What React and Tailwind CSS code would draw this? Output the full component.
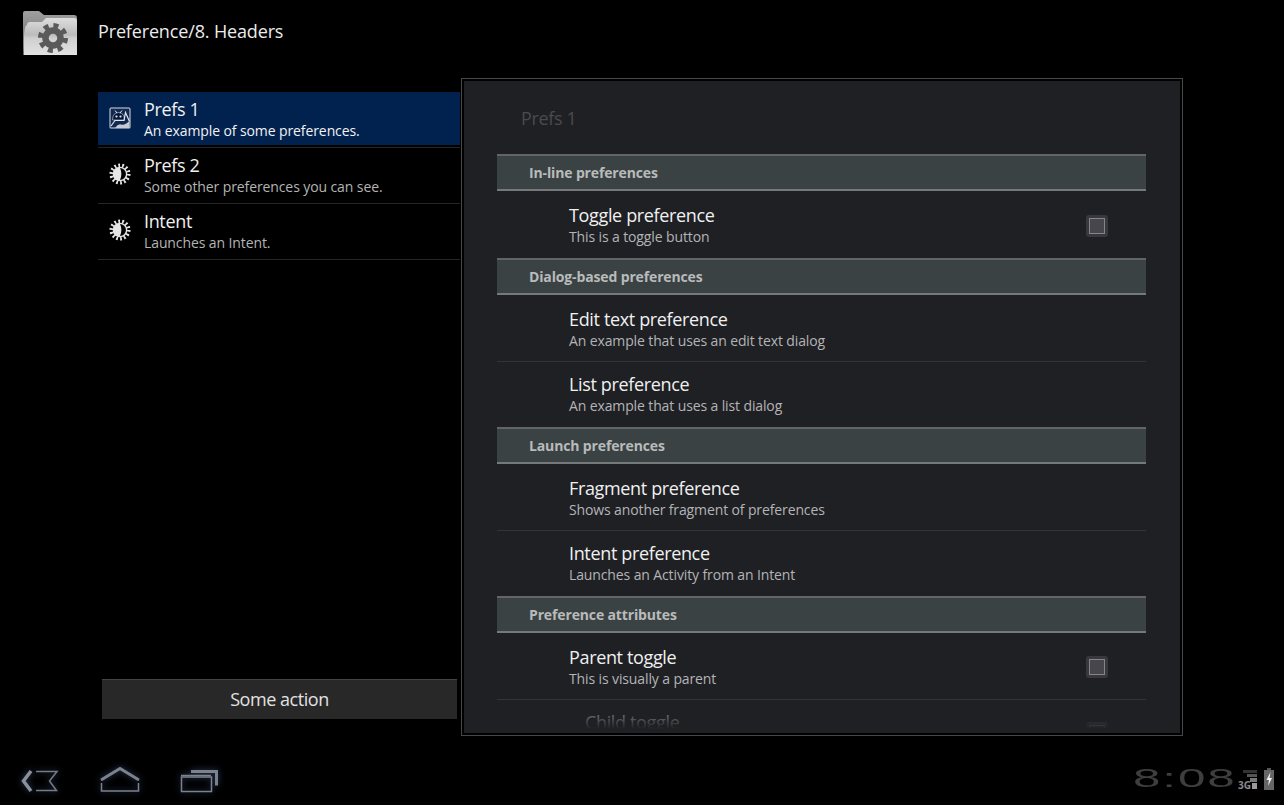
import React from "react";

const headers = [
  { title: "Prefs 1", sub: "An example of some preferences.", icon: "android", active: true },
  { title: "Prefs 2", sub: "Some other preferences you can see.", icon: "sun" },
  { title: "Intent", sub: "Launches an Intent.", icon: "sun" },
];

const sections = [
  { title: "In-line preferences", rows: [{ title: "Toggle preference", sub: "This is a toggle button", check: true }] },
  {
    title: "Dialog-based preferences",
    rows: [
      { title: "Edit text preference", sub: "An example that uses an edit text dialog" },
      { title: "List preference", sub: "An example that uses a list dialog" },
    ],
  },
  {
    title: "Launch preferences",
    rows: [
      { title: "Fragment preference", sub: "Shows another fragment of preferences" },
      { title: "Intent preference", sub: "Launches an Activity from an Intent" },
    ],
  },
  {
    title: "Preference attributes",
    rows: [
      { title: "Parent toggle", sub: "This is visually a parent", check: true },
      { title: "Child toggle", check: true, child: true },
    ],
  },
];

function FolderIcon() {
  return (
    <svg width="56" height="46" viewBox="0 0 56 46">
      <defs>
        <linearGradient id="fb" x1="0" y1="0" x2="0" y2="1">
          <stop offset="0" stopColor="#a0a0a0" />
          <stop offset="1" stopColor="#666" />
        </linearGradient>
        <linearGradient id="ff" x1="0" y1="0" x2="0" y2="1">
          <stop offset="0" stopColor="#dedede" />
          <stop offset="0.45" stopColor="#bcbcbc" />
          <stop offset="0.55" stopColor="#cfcfcf" />
          <stop offset="1" stopColor="#e2e2e2" />
        </linearGradient>
      </defs>
      <path d="M1 45V3q0-2 2-2h14l5 4h30q3 0 3 3v37z" fill="url(#fb)" />
      <path d="M2 45q-1-30 3-30q0-3 3-3h12l4-4h28q3 0 3 3v34z" fill="url(#ff)" />
      <circle cx="31" cy="28" r="12.5" fill="none" stroke="#5a5a5a" strokeWidth="5" strokeDasharray="5 4.82" />
      <circle cx="31" cy="28" r="7.5" fill="none" stroke="#5a5a5a" strokeWidth="6.5" />
    </svg>
  );
}

function AndroidIcon() {
  return (
    <svg width="22" height="22" viewBox="0 0 22 22">
      <rect x="0.5" y="0.5" width="21" height="21" rx="1.5" fill="#d8dde4" />
      <rect x="1.5" y="1.5" width="19" height="19" fill="#12294f" />
      <path d="M3.500 13q0-7 6-7.500q6 .5 6 7.500z" fill="#04173a" stroke="#c8d0dc" strokeWidth="0.6" />
      <path d="M6 3.500l2 2.500M13 3.500l-2 2.500" stroke="#e6eaf0" strokeWidth="1" />
      <circle cx="7.500" cy="9.500" r="1.100" fill="#e6eaf0" />
      <circle cx="11.500" cy="9.500" r="1.100" fill="#e6eaf0" />
      <path d="M2 19l4-5.500h9l1.500-8l4 9" stroke="#dfe4ea" strokeWidth="1.200" fill="none" />
      <path d="M6 21q3-4.500 6-3.500q4 1 8.500-3.500v7z" fill="#c4cbd6" />
    </svg>
  );
}

function SunIcon() {
  return (
    <svg width="22" height="22" viewBox="0 0 24 24">
      <circle cx="12" cy="12" r="9.500" fill="none" stroke="#e6e6e6" strokeWidth="4" strokeDasharray="1.900 2.360" />
      <circle cx="12" cy="12" r="8" fill="#e6e6e6" />
      <path d="M12 5.500a6.500 6.500 0 0 1 0 13q3-6.500 0-13z" fill="#000" />
    </svg>
  );
}

function Check() {
  return (
    <span className="flex w-[22px] h-[22px] items-center justify-center rounded-[3px] bg-[#38383d] mr-[38px] shrink-0">
      <span className="block w-[16px] h-[16px] border border-[#84848a] bg-[#46464c]" />
    </span>
  );
}

function Row({ row, last }) {
  return (
    <div className={`flex h-[65px] items-center justify-between ${last ? "" : "border-b border-[#333438]"}`}>
      <div className={`h-[65px] pt-[10px] ${row.child ? "pl-[88px]" : "pl-[72px]"}`}>
        <div className={`text-[18px] leading-[25px] tracking-[-0.35px] ${row.child ? "text-[#77777a]" : "text-[#f0f0f0]"}`}>{row.title}</div>
        {row.sub && <div className="text-[14px] leading-[18px] tracking-[-0.12px] text-[#b4b4b6]">{row.sub}</div>}
      </div>
      {row.check && <Check />}
    </div>
  );
}

function BackIcon() {
  return (
    <svg className="drop-shadow-[0_0_3px_#2c3f66]" width="44" height="30" viewBox="18 765 44 30" fill="none">
      <path d="M31 771l-7.500 10l7.500 10" stroke="#8b9098" strokeWidth="3.500" />
      <path d="M36 771.500h21l-7.500 9.500l7 9.500h-20.500" stroke="#777c84" strokeWidth="1.500" />
    </svg>
  );
}

function HomeIcon() {
  return (
    <svg className="drop-shadow-[0_0_3px_#2c3f66]" width="44" height="30" viewBox="98 765 44 30" fill="none">
      <path d="M101 780l19-11.500l19 11.500" stroke="#7d828a" strokeWidth="3" />
      <path d="M101.500 783v8h37v-8" stroke="#7d828a" strokeWidth="1.500" />
    </svg>
  );
}

function RecentIcon() {
  return (
    <svg className="drop-shadow-[0_0_3px_#2c3f66]" width="44" height="30" viewBox="178 765 44 30" fill="none">
      <path d="M191 771.500h25.500v14" stroke="#7d828a" strokeWidth="3" />
      <rect x="181.500" y="777" width="30" height="14.500" stroke="#7d828a" strokeWidth="1.500" />
      <path d="M181 775.500h30" stroke="#7d828a" strokeWidth="1.500" />
    </svg>
  );
}

export default function App() {
  return (
    <div className="w-[1284px] h-[805px] overflow-hidden bg-black text-white font-['Open_Sans','Noto_Sans',sans-serif]">
      <div className="flex h-[62px] items-center pl-[22px]">
        <div className="mt-[3px]"><FolderIcon /></div>
        <span className="ml-[20px] text-[18px] tracking-[-0.15px] text-[#ececec]">Preference/8. Headers</span>
      </div>

      <div className="flex h-[658px] mt-[16px] pl-[98px]">
        <div className="flex w-[362px] flex-col pt-[14px] pb-[17px]">
          {headers.map((h) => (
            <div key={h.title} className="border-b border-[#262626] h-[56px] pb-[1px]">
              <div className={`flex h-[53px] items-center ${h.active ? "bg-[#01214e]" : ""}`}>
                <div className="flex w-[46px] justify-center pr-[2px] pb-[2px]">
                  {h.icon === "android" ? <AndroidIcon /> : <SunIcon />}
                </div>
                <div>
                  <div className="text-[18px] leading-[23px] tracking-[-0.35px] text-[#f0f0f0]">{h.title}</div>
                  <div className={`text-[14px] leading-[19px] tracking-[-0.1px] ${h.active ? "text-[#f2f2f2]" : "text-[#b4b4b4]"}`}>{h.sub}</div>
                </div>
              </div>
            </div>
          ))}
          <button className="mt-auto ml-[4px] mr-[3px] h-[40px] border-t border-[#444] bg-[#282828] text-[18px] tracking-[-0.45px] text-[#e2e2e2]">
            Some action
          </button>
        </div>

        <div className="ml-[1px] w-[722px] h-[658px] border border-[#48484a] p-[2px]">
          <div className="relative h-full overflow-hidden bg-[#1f2024] pl-[33px] pr-[34px]">
            <div className="flex h-[73px] items-center pl-[24px] pt-[1px] text-[18px] tracking-[-0.35px] text-[#4a4a4e]">Prefs 1</div>
            {sections.map((s) => (
              <div key={s.title}>
                <div className="mb-[2px] flex h-[37px] items-center border-y-2 border-t-[#626466] border-b-[#76797a] bg-[#3a4244] pl-[32px] text-[14px] font-bold tracking-[-0.14px] text-[#b9bbbb]">
                  {s.title}
                </div>
                {s.rows.map((r, i) => (
                  <Row key={r.title} row={r} last={i === s.rows.length - 1} />
                ))}
              </div>
            ))}
            <div className="absolute bottom-0 left-0 right-0 h-[20px] bg-gradient-to-b from-transparent to-[#1f2024] to-80%" />
          </div>
        </div>
      </div>

      <div className="flex h-[69px] pt-[29px] pl-[18px]">
        <div className="flex gap-[36px]">
          <BackIcon />
          <HomeIcon />
          <RecentIcon />
        </div>
        <div className="ml-auto flex items-start pr-[9px]">
          <span className="block w-[100px] origin-top-left scale-x-[1.9] text-[26px] leading-[26px] font-['Liberation_Sans',sans-serif] text-[#3e3e3e] tracking-[1px]">
            8:08
          </span>
          <div className="relative ml-[2px] h-[26px] w-[22px]">
            <svg className="absolute left-[2px] top-0" width="20" height="26" viewBox="0 0 20 26">
              <rect x="6" y="5" width="14" height="3" fill="#333" />
              <rect x="10" y="9" width="10" height="3" fill="#555" />
              <rect x="13" y="13" width="7" height="4" fill="#777" />
              <rect x="15" y="18" width="5" height="6" fill="#999" />
            </svg>
            <span className="absolute left-[3px] top-[14px] text-[10px] leading-[12px] font-bold text-[#8a8a8a]">3G</span>
          </div>
          <svg className="ml-[6px]" width="12" height="26" viewBox="0 0 12 26">
            <rect x="4" y="3" width="4" height="2" fill="#555" />
            <rect x="1" y="5" width="10" height="20" fill="#666" />
            <path d="M7.500 7l-4 8h2.500l-1 6l4-8h-2.500z" fill="#f4f4f4" />
          </svg>
        </div>
      </div>
    </div>
  );
}
